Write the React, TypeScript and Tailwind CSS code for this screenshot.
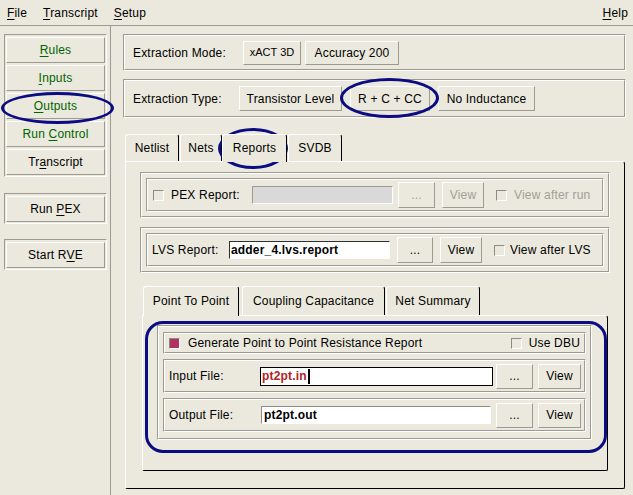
import React from "react";

type P = { className?: string; children?: React.ReactNode };

// Tk-style raised button
const Btn = ({ className = "", children, dim }: P & { dim?: boolean }) => (
  <div
    className={`flex shrink-0 items-center justify-center border border-t-white border-l-white border-r-[#9d9b91] border-b-[#9d9b91] ${
      dim ? "text-[#a19f97]" : ""
    } ${className}`}
  >
    <span>{children}</span>
  </div>
);

// etched frame
const Groove = ({ className = "", inner = "", children }: P & { inner?: string }) => (
  <div className={`border border-t-[#9d9b91] border-l-[#9d9b91] border-r-white border-b-white ${className}`}>
    <div className={`h-full border border-t-white border-l-white border-r-[#9d9b91] border-b-[#9d9b91] ${inner}`}>
      {children}
    </div>
  </div>
);

const Check = ({ on, className = "" }: { on?: boolean; className?: string }) => (
  <span
    className={`block size-[11px] shrink-0 border border-t-[#8d8b83] border-l-[#8d8b83] border-r-white border-b-white ${
      on ? "bg-[#b03060]" : ""
    } ${className}`}
  />
);

const Tab = ({ className = "", children, active }: P & { active?: boolean }) => (
  <div
    className={`flex shrink-0 items-center justify-center rounded-t-[3px] border-t border-l border-r border-t-white border-l-white border-r-black ${
      active ? "relative z-10 -mb-px pb-px bg-[#ebe9dd]" : ""
    } ${className}`}
  >
    <span>{children}</span>
  </div>
);

const U = ({ c }: { c: string }) => <span className="underline underline-offset-2">{c}</span>;

const SideBtn = ({ children, green }: P & { green?: boolean }) => (
  <Btn className={`h-[26px] w-full ${green ? "text-[#006400]" : "text-black"}`}>{children}</Btn>
);

export default function App() {
  return (
    <div className="relative h-[495px] w-[633px] overflow-hidden bg-[#ebe9dd] font-['Liberation_Sans',Arial,sans-serif] text-[12px] tracking-[0.18px] text-black">
      {/* menu bar */}
      <div className="flex h-[26px] items-center justify-between border-b border-[#9d9b91] pl-[7px] pr-[5px]">
        <div className="flex gap-[16px]">
          <span>
            <U c="F" />ile
          </span>
          <span>
            <U c="T" />ranscript
          </span>
          <span>
            <U c="S" />etup
          </span>
        </div>
        <span>
          <U c="H" />elp
        </span>
      </div>

      <div className="flex h-[469px]">
        {/* sidebar */}
        <div className="w-[111px] shrink-0 border-r border-[#9d9b91] pl-[4px] pt-[8px]">
          <div className="flex w-[103px] flex-col gap-[2px] border border-t-[#9d9b91] border-l-[#9d9b91] border-r-white border-b-white px-[1px] pt-[2px] pb-[1px]">
            <SideBtn green>
              <U c="R" />ules
            </SideBtn>
            <SideBtn green>
              <U c="I" />nputs
            </SideBtn>
            <SideBtn green>
              <U c="O" />utputs
            </SideBtn>
            <SideBtn green>
              Run <U c="C" />ontrol
            </SideBtn>
            <SideBtn>
              Tr<U c="a" />nscript
            </SideBtn>
          </div>
          <div className="mt-[16px] w-[103px] border border-t-[#9d9b91] border-l-[#9d9b91] border-r-white border-b-white px-[1px] pt-[2px] pb-[1px]">
            <SideBtn>
              Run <U c="P" />EX
            </SideBtn>
          </div>
          <div className="mt-[15px] w-[103px] border border-t-[#9d9b91] border-l-[#9d9b91] border-r-white border-b-white px-[1px] pt-[2px] pb-[1px]">
            <SideBtn>
              Start R<U c="V" />E
            </SideBtn>
          </div>
        </div>

        {/* main */}
        <div className="flex-1 pl-[12px] pr-[7px] pt-[8px]">
          <Groove className="h-[37px]" inner="flex items-center pl-[8px]">
            <span className="w-[110px] shrink-0">Extraction Mode:</span>
            <Btn className="h-[24px] w-[58px] text-[11px] tracking-normal">xACT 3D</Btn>
            <Btn className="ml-[4px] h-[24px] w-[94px]">Accuracy 200</Btn>
          </Groove>

          <Groove className="mt-[8px] h-[39px]" inner="flex items-center pl-[8px]">
            <span className="w-[106px] shrink-0">Extraction Type:</span>
            <Btn className="h-[25px] w-[103px]">Transistor Level</Btn>
            <Btn className="ml-[8px] h-[25px] w-[80px]">R + C + CC</Btn>
            <Btn className="ml-[8px] h-[25px] w-[97px]">No Inductance</Btn>
          </Groove>

          {/* outer notebook */}
          <div className="ml-[2px] mt-[16px] w-[500px]">
            <div className="flex h-[27px] items-end">
              <Tab className="h-[27px] w-[54px]">Netlist</Tab>
              <Tab className="ml-[1px] h-[27px] w-[42px]">Nets</Tab>
              <Tab active className="h-[28px] w-[65px]">
                Reports
              </Tab>
              <Tab className="ml-[1px] h-[27px] w-[54px]">SVDB</Tab>
            </div>
            <div className="h-[328px] rounded-tr-[3px] rounded-b-[2px] border border-t-white border-l-white border-r-black border-b-black px-[14px] pt-[10px]">
              <Groove className="h-[46px]" inner="p-[4px]">
                <Groove className="h-full" inner="flex items-center pl-[5px]">
                  <Check />
                  <span className="ml-[7px] w-[81px] shrink-0">PEX Report:</span>
                  <div className="h-[18px] w-[141px] shrink-0 border border-t-[#9d9b91] border-l-[#9d9b91] border-r-white border-b-white bg-[#d9d9d9]" />
                  <Btn dim className="ml-[5px] h-[26px] w-[37px]">
                    ...
                  </Btn>
                  <Btn dim className="ml-[7px] h-[26px] w-[42px]">
                    View
                  </Btn>
                  <Check className="ml-[12px]" />
                  <span className="ml-[7px] text-[#a19f97]">View after run</span>
                </Groove>
              </Groove>

              <Groove className="mt-[9px] h-[46px]" inner="p-[4px]">
                <Groove className="h-full" inner="flex items-center pl-[4px]">
                  <span className="w-[77px] shrink-0">LVS Report:</span>
                  <div className="flex h-[18px] w-[161px] shrink-0 items-center border border-t-[#303030] border-l-[#303030] border-r-white border-b-white bg-white pl-[1px] font-bold">
                    adder_4.lvs.report
                  </div>
                  <Btn className="ml-[7px] h-[26px] w-[36px]">...</Btn>
                  <Btn className="ml-[7px] h-[26px] w-[42px]">View</Btn>
                  <Check className="ml-[12px]" />
                  <span className="ml-[5px]">View after LVS</span>
                </Groove>
              </Groove>

              {/* inner notebook */}
              <div className="ml-[2px] mt-[13px] w-[466px]">
                <div className="flex h-[29px] items-end pl-[1px]">
                  <Tab active className="h-[30px] w-[96px]">
                    Point To Point
                  </Tab>
                  <Tab className="ml-[3px] h-[29px] w-[143px]">Coupling Capacitance</Tab>
                  <Tab className="ml-[1px] h-[29px] w-[94px]">Net Summary</Tab>
                </div>
                <div className="h-[156px] rounded-tr-[3px] rounded-b-[2px] border border-t-white border-l-white border-r-black border-b-black pl-[14px] pt-[9px]">
                  <Groove className="h-[115px] w-[435px]" inner="flex flex-col gap-[5px] px-[4px] pt-[5px] pb-[6px]">
                    <Groove className="h-[22px] shrink-0" inner="flex items-center pl-[4px] pr-[4px]">
                      <Check on />
                      <span className="ml-[8px]">Generate Point to Point Resistance Report</span>
                      <Check className="ml-auto" />
                      <span className="ml-[7px]">Use DBU</span>
                    </Groove>
                    <Groove className="h-[34px] shrink-0" inner="flex items-center pl-[4px]">
                      <span className="w-[91px] shrink-0">Input File:</span>
                      <div className="flex h-[19px] w-[233px] shrink-0 items-center border border-black bg-white pl-[1px] font-bold text-[#b22222]">
                        pt2pt.in
                        <span className="ml-[1px] h-[15px] w-[2px] bg-black" />
                      </div>
                      <Btn className="ml-[3px] h-[25px] w-[37px]">...</Btn>
                      <Btn className="ml-[5px] h-[25px] w-[43px]">View</Btn>
                    </Groove>
                    <Groove className="h-[34px] shrink-0" inner="flex items-center pl-[4px]">
                      <span className="w-[92px] shrink-0">Output File:</span>
                      <div className="flex h-[18px] w-[230px] shrink-0 items-center border border-t-[#8d8b83] border-l-[#8d8b83] border-r-white border-b-white bg-white pl-[2px] font-bold">
                        pt2pt.out
                      </div>
                      <Btn className="ml-[5px] h-[25px] w-[37px]">...</Btn>
                      <Btn className="ml-[5px] h-[25px] w-[43px]">View</Btn>
                    </Groove>
                  </Groove>
                </div>
              </div>
            </div>
          </div>
        </div>
      </div>

      {/* hand-drawn highlight marks */}
      <div className="pointer-events-none absolute left-[1px] top-[92px] h-[32px] w-[113px] rounded-[50%] border-[3px] border-[#0c0c82]" />
      <div className="pointer-events-none absolute left-[340px] top-[78px] h-[40px] w-[99px] rounded-[50%] border-[3px] border-[#0c0c82]" />
      <div className="pointer-events-none absolute left-[218px] top-[128px] h-[41px] w-[70px] rounded-[50%] border-[3px] border-[#0c0c82]" />
      <div className="pointer-events-none absolute left-[145px] top-[321px] h-[132px] w-[462px] rounded-[18px] border-[3px] border-[#0c0c82]" />
    </div>
  );
}
